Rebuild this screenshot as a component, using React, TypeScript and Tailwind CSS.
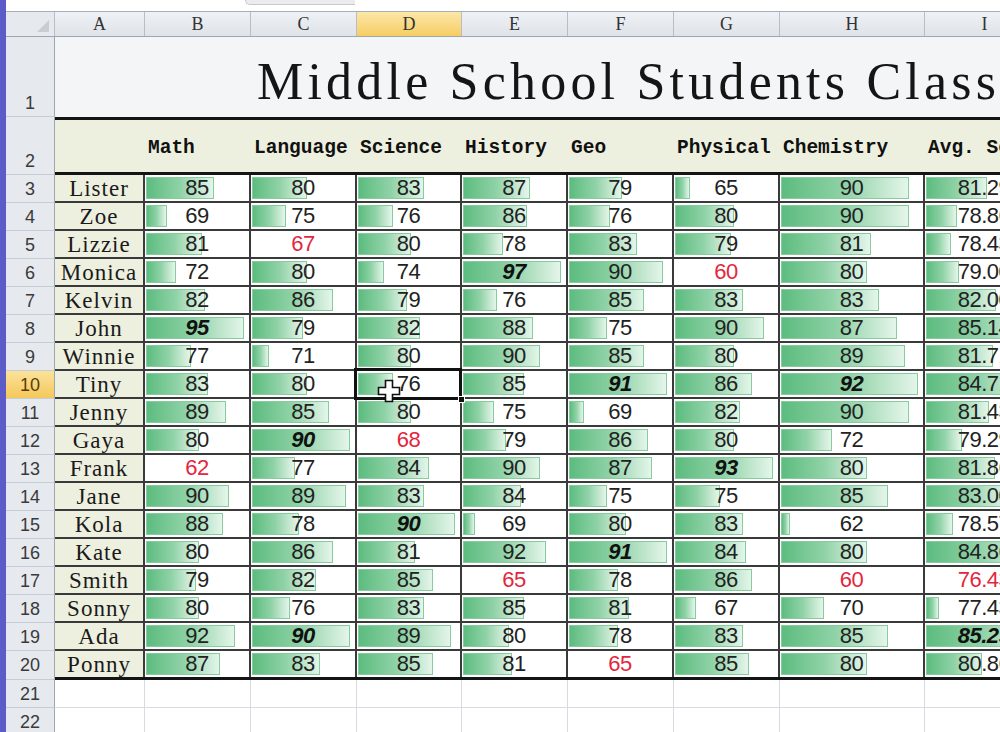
import React from "react";

type Col = { key: string; w: number; cls: string };

const cols: Col[] = [
  { key: "A", w: 90, cls: "w-[90px]" },
  { key: "B", w: 106, cls: "w-[106px]" },
  { key: "C", w: 106, cls: "w-[106px]" },
  { key: "D", w: 105, cls: "w-[105px]" },
  { key: "E", w: 106, cls: "w-[106px]" },
  { key: "F", w: 106, cls: "w-[106px]" },
  { key: "G", w: 106, cls: "w-[106px]" },
  { key: "H", w: 145, cls: "w-[145px]" },
  { key: "I", w: 120, cls: "w-[120px]" },
];

const subjects = ["Math", "Language", "Science", "History", "Geo", "Physical", "Chemistry", "Avg. Score"];

const students: [string, number[]][] = [
  ["Lister", [85, 80, 83, 87, 79, 65, 90]],
  ["Zoe", [69, 75, 76, 86, 76, 80, 90]],
  ["Lizzie", [81, 67, 80, 78, 83, 79, 81]],
  ["Monica", [72, 80, 74, 97, 90, 60, 80]],
  ["Kelvin", [82, 86, 79, 76, 85, 83, 83]],
  ["John", [95, 79, 82, 88, 75, 90, 87]],
  ["Winnie", [77, 71, 80, 90, 85, 80, 89]],
  ["Tiny", [83, 80, 76, 85, 91, 86, 92]],
  ["Jenny", [89, 85, 80, 75, 69, 82, 90]],
  ["Gaya", [80, 90, 68, 79, 86, 80, 72]],
  ["Frank", [62, 77, 84, 90, 87, 93, 80]],
  ["Jane", [90, 89, 83, 84, 75, 75, 85]],
  ["Kola", [88, 78, 90, 69, 80, 83, 62]],
  ["Kate", [80, 86, 81, 92, 91, 84, 80]],
  ["Smith", [79, 82, 85, 65, 78, 86, 60]],
  ["Sonny", [80, 76, 83, 85, 81, 67, 70]],
  ["Ada", [92, 90, 89, 80, 78, 83, 85]],
  ["Ponny", [87, 83, 85, 81, 65, 85, 80]],
];

// full table of numbers: 7 subjects + average
const table = students.map(([, s]) => [...s, s.reduce((a, b) => a + b, 0) / s.length]);
const colMin = subjects.map((_, c) => Math.min(...table.map((r) => r[c])));
const colMax = subjects.map((_, c) => Math.max(...table.map((r) => r[c])));

const serif = "font-['Liberation_Serif','Times_New_Roman',serif]";
const sans = "font-['Liberation_Sans',Arial,sans-serif]";

function RowHead({ n, h, active, bottom }: { n: number; h: string; active?: boolean; bottom?: boolean }) {
  return (
    <div
      className={`${h} w-[49px] shrink-0 flex justify-center border-r border-b border-r-[#9ea6b0] border-b-[#c6ccd4] ${sans} text-[18px] leading-none ${
        bottom ? "items-end pb-[4px]" : "items-center"
      } ${active ? "bg-linear-to-b from-[#fbe29a] to-[#f5c858] text-[#5a3d06]" : "bg-[#e6e9ee] text-[#3a3a3a]"}`}
    >
      {n}
    </div>
  );
}

function Cursor() {
  return (
    <svg width="24" height="24" viewBox="0 0 24 24" className="absolute z-20 left-[20px] top-[8px]">
      <path
        d="M8.5 1.5h7v7h7v7h-7v7h-7v-7h-7v-7h7z"
        fill="#fff"
        stroke="#111"
        strokeWidth="1.6"
        strokeLinejoin="miter"
      />
    </svg>
  );
}

function DataCell({ col, value, ci, selected }: { col: Col; value: number; ci: number; selected?: boolean }) {
  const min = colMin[ci];
  const max = colMax[ci];
  const barW = Math.round(((value - min) / (max - min)) * (col.w - 8));
  const isMin = value === min;
  const isMax = value === max;
  const text = ci === 7 ? value.toFixed(2) : String(value);
  return (
    <div
      className={`${col.cls} shrink-0 relative h-full bg-white border-r-2 border-[#3a3a3a] flex items-center justify-center ${
        selected ? "z-10" : ""
      }`}
    >
      {barW > 0 && (
        <div
          className="absolute left-[1px] top-[2px] bottom-[2px] bg-linear-to-r from-[#5cbc7f] via-[#8fd2a7] to-[#e4f5ea] border border-[#86cc9f]"
          style={{ width: barW }}
        />
      )}
      <span
        className={`relative text-[22px] leading-none tracking-[-0.5px] ${sans} ${
          isMin ? "text-[#e3263d]" : isMax ? "font-bold italic text-[#111]" : "text-[#222]"
        }`}
      >
        {text}
      </span>
      {selected && (
        <>
          <div className="absolute z-10 -left-[3px] -top-[3px] -right-[2px] -bottom-[3px] border-[3px] border-[#111]" />
          <div className="absolute z-10 -right-[5px] -bottom-[6px] w-[7px] h-[7px] bg-[#111] border border-white" />
          <Cursor />
        </>
      )}
    </div>
  );
}

export default function App() {
  return (
    <div className="flex h-[732px] w-[1000px] overflow-hidden bg-white">
      <div className="w-[6px] shrink-0 bg-[#5b5cc8]" />
      <div className="flex flex-col min-w-0 flex-1 whitespace-nowrap">
        {/* formula bar edge */}
        <div className="h-[12px] shrink-0 flex border-b border-[#a9adb5] bg-white">
          <div className="w-[239px] shrink-0" />
          <div className="w-[110px] h-[5px] bg-[#ececee] border-l border-b border-[#c9c9cc] rounded-bl-[6px]" />
        </div>

        {/* column letters */}
        <div className="h-[25px] shrink-0 flex border-b border-[#9ea6b0]">
          <div className="w-[49px] shrink-0 relative bg-[#e6e9ee] border-r border-[#b7bec8]">
            <svg width="14" height="14" viewBox="0 0 14 14" className="absolute right-[4px] bottom-[3px]">
              <polygon points="13,1 13,13 1,13" fill="#c9cdd3" />
            </svg>
          </div>
          {cols.map((c) => (
            <div
              key={c.key}
              className={`${c.cls} shrink-0 flex items-center justify-center border-r border-[#b7bec8] ${serif} text-[18px] text-[#333] ${
                c.key === "D"
                  ? "bg-linear-to-b from-[#fce7a6] to-[#f6cd62]"
                  : "bg-linear-to-b from-[#eef1f5] to-[#dfe3e9]"
              }`}
            >
              {c.key}
            </div>
          ))}
        </div>

        {/* row 1: title */}
        <div className="h-[80px] shrink-0 flex">
          <RowHead n={1} h="h-[80px]" bottom />
          <div className="flex-1 bg-[#f4f5f7] flex items-center pt-[10px] pl-[202px]">
            <span className={`${serif} text-[52px] leading-none tracking-[4.2px] text-[#151515]`}>
              Middle School Students Class Scores
            </span>
          </div>
        </div>

        {/* row 2: headers */}
        <div className="h-[58px] shrink-0 flex">
          <RowHead n={2} h="h-[58px]" bottom />
          <div className="flex bg-[#eef0df] border-t-[3px] border-b-[3px] border-[#141414]">
            {cols.map((c, i) => (
              <div
                key={c.key}
                className={`${c.cls} shrink-0 flex items-center pl-[3px] pt-[6px] font-['Liberation_Mono','Courier_New',monospace] font-bold text-[19.5px] text-[#111]`}
              >
                {i === 0 ? "" : subjects[i - 1]}
              </div>
            ))}
          </div>
        </div>

        {/* rows 3-20 */}
        {students.map(([name], r) => {
          const last = r === students.length - 1;
          const rowNo = r + 3;
          return (
            <div key={name} className={`${last ? "h-[29px]" : "h-[28px]"} shrink-0 flex`}>
              <RowHead n={rowNo} h={last ? "h-[29px]" : "h-[28px]"} active={rowNo === 10} />
              <div
                className={`flex ${last ? "border-b-[3px] border-[#141414]" : "border-b-2 border-[#3a3a3a]"}`}
              >
                <div
                  className={`${cols[0].cls} shrink-0 h-full bg-[#eef0df] border-r-2 border-[#3a3a3a] flex items-center justify-center ${serif} text-[23px] leading-none tracking-[1px] text-[#1a1a1a]`}
                >
                  {name}
                </div>
                {table[r].map((v, ci) => (
                  <DataCell key={ci} col={cols[ci + 1]} value={v} ci={ci} selected={rowNo === 10 && ci === 2} />
                ))}
              </div>
            </div>
          );
        })}

        {/* empty rows */}
        {[21, 22].map((n) => (
          <div key={n} className="h-[28px] shrink-0 flex">
            <RowHead n={n} h="h-[28px]" />
            <div className="flex border-b border-[#d8dce2]">
              {cols.map((c) => (
                <div key={c.key} className={`${c.cls} shrink-0 h-full border-r border-[#d8dce2]`} />
              ))}
            </div>
          </div>
        ))}
      </div>
    </div>
  );
}
